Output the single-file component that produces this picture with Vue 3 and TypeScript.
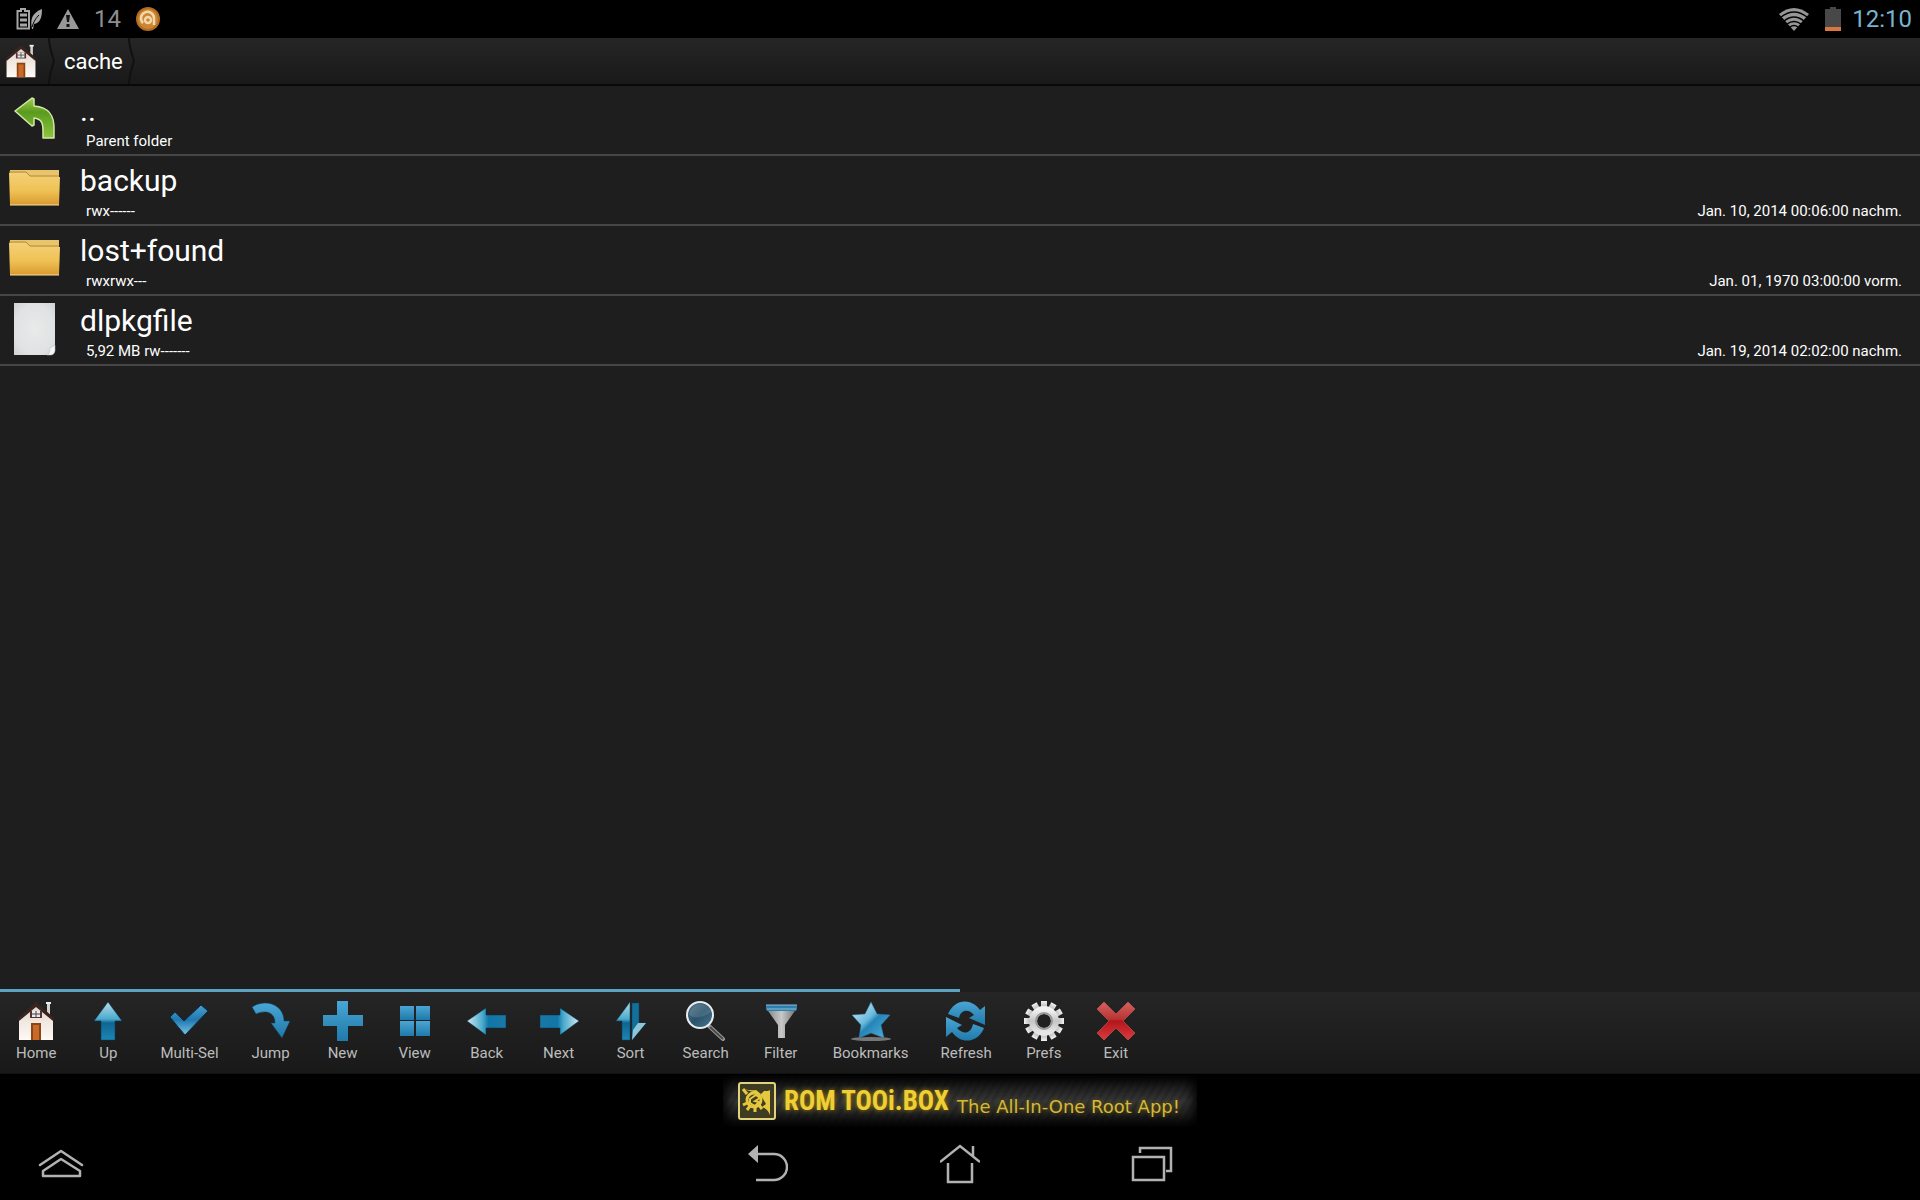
<script setup lang="ts">
interface Entry {
  name: string
  info: string
  date: string
  kind: 'parent' | 'folder' | 'file'
}

const entries: Entry[] = [
  { name: '..', info: 'Parent folder', date: '', kind: 'parent' },
  { name: 'backup', info: 'rwx------', date: 'Jan. 10, 2014 00:06:00 nachm.', kind: 'folder' },
  { name: 'lost+found', info: 'rwxrwx---', date: 'Jan. 01, 1970 03:00:00 vorm.', kind: 'folder' },
  { name: 'dlpkgfile', info: '5,92 MB rw-------', date: 'Jan. 19, 2014 02:02:00 nachm.', kind: 'file' },
]

const tools: string[] = [
  'Home', 'Up', 'Multi-Sel', 'Jump', 'New', 'View', 'Back', 'Next',
  'Sort', 'Search', 'Filter', 'Bookmarks', 'Refresh', 'Prefs', 'Exit',
]

const teeth: number[] = Array.from({ length: 12 }, (_, i) => i * 30)
</script>

<template>
  <div class="screen">
    <svg class="defs" width="0" height="0" aria-hidden="true">
      <defs>
        <linearGradient id="blue" x1="0" y1="0" x2="0" y2="1">
          <stop offset="0" stop-color="#4aa6d4" /><stop offset="1" stop-color="#1f79aa" />
        </linearGradient>
        <linearGradient id="blueUp" x1="0" y1="0" x2="0" y2="1">
          <stop offset="0" stop-color="#b9dce8" /><stop offset=".45" stop-color="#49a9cd" />
          <stop offset=".55" stop-color="#0f6591" /><stop offset="1" stop-color="#1b86b4" />
        </linearGradient>
        <linearGradient id="blueLeft">
          <stop offset="0" stop-color="#d3e9ef" /><stop offset=".4" stop-color="#49a9cd" />
          <stop offset=".55" stop-color="#1176a8" /><stop offset="1" stop-color="#1b78a6" />
        </linearGradient>
        <linearGradient id="blueRight" x1="1" x2="0">
          <stop offset="0" stop-color="#d3e9ef" /><stop offset=".4" stop-color="#49a9cd" />
          <stop offset=".55" stop-color="#1176a8" /><stop offset="1" stop-color="#1b78a6" />
        </linearGradient>
        <linearGradient id="check" x1="0" y1="0" x2="0" y2="1">
          <stop offset="0" stop-color="#4a9fce" /><stop offset=".5" stop-color="#2079b0" />
          <stop offset="1" stop-color="#7cc3e6" />
        </linearGradient>
        <linearGradient id="star" x1="0" y1="0" x2="1" y2="1">
          <stop offset="0" stop-color="#e0f2f8" /><stop offset=".45" stop-color="#68b8dc" />
          <stop offset=".55" stop-color="#2585b8" /><stop offset="1" stop-color="#57b5dc" />
        </linearGradient>
        <linearGradient id="metal">
          <stop offset="0" stop-color="#808080" /><stop offset=".5" stop-color="#c8c8c8" />
          <stop offset="1" stop-color="#6a6a6a" />
        </linearGradient>
        <linearGradient id="gear" x1="0" y1="0" x2="0" y2="1">
          <stop offset="0" stop-color="#f2f2f2" /><stop offset=".5" stop-color="#c4c4c4" />
          <stop offset="1" stop-color="#e6e6e6" />
        </linearGradient>
        <linearGradient id="red" x1="0" y1="0" x2="0" y2="1">
          <stop offset="0" stop-color="#d56260" /><stop offset=".45" stop-color="#b83434" />
          <stop offset=".5" stop-color="#b3161b" /><stop offset="1" stop-color="#dd3a3e" />
        </linearGradient>
        <linearGradient id="lens" x1="0" y1="0" x2="1" y2="1">
          <stop offset="0" stop-color="#58798c" /><stop offset=".5" stop-color="#2a536b" />
          <stop offset="1" stop-color="#4a7791" />
        </linearGradient>
        <linearGradient id="green" x1="0" y1="0" x2="0" y2="1">
          <stop offset="0" stop-color="#a5cf4f" /><stop offset=".35" stop-color="#5a9a1e" />
          <stop offset="1" stop-color="#8cc63c" />
        </linearGradient>
        <linearGradient id="gold" x1="0" y1="0" x2="0" y2="1">
          <stop offset="0" stop-color="#f3d078" /><stop offset=".55" stop-color="#efc255" />
          <stop offset="1" stop-color="#d99a30" />
        </linearGradient>
        <radialGradient id="paper" r=".8">
          <stop offset="0" stop-color="#e9eaea" /><stop offset=".6" stop-color="#e0e2e3" />
          <stop offset="1" stop-color="#c8cccd" />
        </radialGradient>
        <linearGradient id="wall" x1="0" y1="0" x2="0" y2="1">
          <stop offset="0" stop-color="#e2d6cf" /><stop offset="1" stop-color="#fffaf4" />
        </linearGradient>
        <symbol id="house" viewBox="0 0 40 40">
          <path d="M31 2h3v12l-3-3z" fill="#d8d2cc" />
          <path d="M30 1h5v2h-5z" fill="#eee" />
          <path d="M20 4 37 19v20H3V19z" fill="url(#wall)" />
          <path d="M20 1 2 17l1 3L20 6l17 14 1-3z" fill="#3a2420" />
          <path d="M14 10h12v7H14z" fill="#5d3030" />
          <path d="M16 10h8v6h-8z" fill="#e8ecec" />
          <path d="M20 10v6M16 13h8" stroke="#444" />
          <path d="M15 22h10v17H15z" fill="#8c4316" />
          <path d="M17 24h6v15h-6z" fill="#c96a29" />
        </symbol>
      </defs>
    </svg>

    <header class="status">
      <div class="status-left">
        <svg viewBox="0 0 26 24" width="26" height="24">
          <path d="M1.500 4H5V2h4v2h4v17.500H1.500z" fill="none" stroke="#a6a6a6" stroke-width="2" />
          <path d="M4 8h7M4 13h7M4 18h7" stroke="#a6a6a6" stroke-width="3" />
          <path d="M16 22c-2-10 0-16 10-20 0 9-2 14-8 15l-1 5z" fill="#a6a6a6" />
          <path d="M16 20c2-6 4-9 7-12" stroke="#000" fill="none" />
        </svg>
        <svg viewBox="0 0 22 20" width="22" height="20">
          <path d="M11 0 22 20H0z" fill="#989898" />
          <path d="M9 6h4l-1 7h-2zM9.500 15h3v3h-3z" fill="#111" />
        </svg>
        <span class="count">14</span>
        <svg viewBox="0 0 24 24" width="24" height="24">
          <circle cx="12" cy="12" r="12" fill="#b06c22" />
          <circle cx="12" cy="12" r="10" fill="#cc8632" />
          <path d="M7 16a6.500 6.500 0 1 1 11-4.500V18" fill="none" stroke="#f3d8ae" stroke-width="2.500" />
          <circle cx="12" cy="13" r="3" fill="none" stroke="#f3d8ae" stroke-width="2.500" />
        </svg>
      </div>
      <div class="status-right">
        <svg viewBox="0 0 32 24" width="32" height="24">
          <path d="M16 24 1 7Q16-5 31 7z" fill="#969696" />
          <path d="M3 10q13-10 26 0M6 14q10-8 20 0M9 17q7-5 14 0M12 20q4-3 8 0" fill="none" stroke="#000" stroke-width="1.500" />
        </svg>
        <svg viewBox="0 0 16 24" width="16" height="24">
          <path d="M0 2h5V0h6v2h5v18H0z" fill="#484848" />
          <path d="M0 20h16v4H0z" fill="#d9783c" />
        </svg>
        <time class="clock">12:10</time>
      </div>
    </header>

    <nav class="crumbs" aria-label="Path">
      <button class="crumb-home" aria-label="Root"><svg width="34" height="34"><use href="#house" /></svg></button>
      <svg viewBox="0 0 8 46" width="8" height="46"><path d="M1 0q0 8 5 23q-5 15-5 23" fill="none" stroke="#111" stroke-width="2" /></svg>
      <button class="crumb">cache</button>
      <svg viewBox="0 0 8 46" width="8" height="46"><path d="M1 0q0 8 5 23q-5 15-5 23" fill="none" stroke="#111" stroke-width="2" /></svg>
    </nav>

    <main class="files">
      <ul>
        <li v-for="e in entries" :key="e.name" class="row">
          <svg class="row-icon" viewBox="0 0 56 56" width="56" height="56">
            <template v-if="e.kind === 'parent'">
              <path d="M9 20 26 7l2 1v7c14 1 21 8 20 25v7H37v-7c0-9-2-12-9-13v7l-2 1z" fill="url(#green)" stroke="#d3e8ac" stroke-width="1.500" stroke-linejoin="round" />
            </template>
            <template v-else-if="e.kind === 'folder'">
              <path d="M4 9h49v35H4z" fill="#d79c34" />
              <path d="M4 9h49v8H4z" fill="#e8c46a" />
              <path d="M3 12h17l4 4h30l-1 28H4z" fill="url(#gold)" />
              <path d="M3 11h17l4 4h29" fill="none" stroke="#b98a36" />
              <path d="M4 44h49" stroke="#ffdf98" />
            </template>
            <template v-else>
              <path d="M8 2h41v46l-7 6H8z" fill="url(#paper)" />
              <path d="M41 54q3-1 3-7l5-3v6q-1 4-4 4z" fill="#f6f6f6" stroke="#b8bcbd" stroke-width=".5" />
            </template>
          </svg>
          <div class="row-text">
            <div class="name">{{ e.name }}</div>
            <div class="meta"><span>{{ e.info }}</span><time>{{ e.date }}</time></div>
          </div>
        </li>
      </ul>
    </main>

    <div class="progress"><div class="progress-fill"></div></div>

    <div class="toolbar" role="toolbar">
      <button v-for="t in tools" :key="t" class="tool">
        <svg viewBox="0 0 40 40" width="40" height="40">
          <use v-if="t === 'Home'" href="#house" />
          <path v-else-if="t === 'Up'" d="M20 1 34 20h-7v19H13V20H6z" fill="url(#blueUp)" stroke="#073e5a" stroke-width=".5" />
          <path v-else-if="t === 'Multi-Sel'" d="m1 16 5-5 9 9L32 4l7 6-23 24Q9 26 1 16z" fill="url(#check)" stroke="#06304a" />
          <path v-else-if="t === 'Jump'" d="M1 6C15-3 33 4 33 20h6l-8 17-11-15h4C24 10 13 9 5 13z" fill="url(#blue)" stroke="#0a4262" stroke-width=".5" />
          <path v-else-if="t === 'New'" d="M14 0h11v14h15v11H25v15H14V25H0V14h14z" fill="url(#blue)" />
          <g v-else-if="t === 'View'" fill="url(#blue)">
            <path d="M5 5h14v14H5z" /><path d="M21 5h14v14H21z" /><path d="M5 20h14v15H5z" /><path d="M21 20h14v15H21z" />
          </g>
          <path v-else-if="t === 'Back'" d="M0 20 19 7v7h20v13H19v7z" fill="url(#blueLeft)" stroke="#07364d" stroke-width=".5" />
          <path v-else-if="t === 'Next'" d="M40 20 21 7v7H1v13h20v7z" fill="url(#blueRight)" stroke="#07364d" stroke-width=".5" />
          <g v-else-if="t === 'Sort'">
            <path d="M19 1v38h-8V20H5z" fill="url(#blueUp)" stroke="#08445f" stroke-width=".5" />
            <path d="M21 2h7v20h7L21 39z" fill="#14709b" stroke="#08445f" stroke-width=".5" />
            <path d="M27 22h8L21 39l1-10z" fill="#8fc5d8" />
          </g>
          <g v-else-if="t === 'Search'">
            <path d="m23 25 14 13" stroke="#999" stroke-width="4" stroke-linecap="round" />
            <path d="m24 26 13 12" stroke="#4a4a4a" stroke-width="2" />
            <circle cx="14" cy="14" r="13" fill="url(#lens)" stroke="#e9edee" stroke-width="2" />
            <path d="M3 14q9 6 22-3Q23 3 14 3 5 4 3 14z" fill="#fff" opacity=".12" />
          </g>
          <g v-else-if="t === 'Filter'">
            <path d="M5 7h31L24 24v13h-7V24z" fill="url(#metal)" />
            <path d="M5 4h31v4l-1 2H6L5 8z" fill="#2c7fae" />
            <path d="M5 4h31M6 8h29" stroke="#8ebdd4" />
          </g>
          <g v-else-if="t === 'Bookmarks'">
            <ellipse cx="20" cy="38" rx="20" ry="2" fill="#777" />
            <path d="m20 1 6 12 13 1-9 10 3 13-13-5-12 5 2-13L1 14l13-1z" fill="url(#star)" stroke="#2a7ba5" stroke-width=".5" />
          </g>
          <g v-else-if="t === 'Refresh'" fill="url(#blue)">
            <path d="M2 13C8-2 25-4 34 9l5-4v19L23 17l5-3C23 8 15 8 13 17z" />
            <path d="M38 27C32 42 15 44 6 31l-6 5V16l16 8-5 3c6 7 14 6 16-4z" />
          </g>
          <g v-else-if="t === 'Prefs'">
            <rect v-for="a in teeth" :key="a" x="17" y="0" width="6" height="10" fill="url(#gear)" :transform="`rotate(${a} 20 20)`" />
            <circle cx="20" cy="20" r="11" fill="none" stroke="url(#gear)" stroke-width="8" />
            <circle cx="20" cy="20" r="8" fill="none" stroke="#9a9a9a" stroke-width="2" />
          </g>
          <path v-else d="m8 1 12 12L32 1l7 7-12 12 12 12-7 7-12-12L8 39l-7-7 12-12L1 8z" fill="url(#red)" stroke="#e06464" stroke-width=".5" />
        </svg>
        <span>{{ t }}</span>
      </button>
    </div>

    <div class="ad">
      <a href="#" class="banner">
        <svg viewBox="0 0 38 38" width="38" height="38">
          <rect x="1" y="1" width="36" height="36" rx="2" fill="#3d3b22" stroke="#e3d27c" stroke-width="2" />
          <path d="M5 7q9 2 13 1l5 4 3-3h4l2-1v25q-2-6-8-8l4-3-6-10z" fill="#e6c83f" />
          <circle cx="16" cy="18" r="7" fill="none" stroke="#e6c83f" stroke-width="3" />
          <path d="m9 12-4-5M9 21l-4 2M12 24l-3 4M17 25v5M21 23l3 4" stroke="#e6c83f" stroke-width="3" />
          <path d="m12 17 6-4 4 3-5 3 4 1-4 4-5-3z" fill="none" stroke="#e6c83f" stroke-width="2" />
        </svg>
        <strong>ROM TOOi.BOX</strong>
        <span class="tagline">The All-In-One Root App!</span>
      </a>
    </div>

    <footer class="navbar">
      <button class="nav-up" aria-label="Show launcher">
        <svg viewBox="0 0 46 30" width="46" height="30">
          <path d="M2 16 23 2l21 14M5 22v5h37v-5L23 10z" fill="none" stroke="#b2b2b2" stroke-width="2.500" stroke-linejoin="round" stroke-linecap="round" />
        </svg>
      </button>
      <div class="nav-main">
        <button aria-label="Go back">
          <svg viewBox="0 0 40 40" width="40" height="40">
            <path d="M8 10h18a13 13 0 0 1 0 26H8" fill="none" stroke="#b2b2b2" stroke-width="2.500" />
            <path d="M0 10 10 1v18z" fill="#b2b2b2" />
          </svg>
        </button>
        <button aria-label="Home screen">
          <svg viewBox="0 0 40 40" width="40" height="40">
            <path d="M0 18 20 2l20 16M33 2v10M8 19v19h24V19" fill="none" stroke="#b2b2b2" stroke-width="2.500" />
          </svg>
        </button>
        <button aria-label="Recent apps">
          <svg viewBox="0 0 42 40" width="42" height="40">
            <path d="M2 13h31v23H2zM9 9V4h31v23h-5" fill="none" stroke="#b2b2b2" stroke-width="2.500" />
          </svg>
        </button>
      </div>
    </footer>
  </div>
</template>

<style>
body {
  margin: 0;
  background: #000;
}
</style>

<style scoped>
.screen {
  min-height: 100vh;
  display: flex;
  flex-direction: column;
  background: #1e1e1e;
  color: #fff;
  font-family: Roboto, "Noto Sans", sans-serif;
}
.defs {
  position: absolute;
}
svg {
  display: block;
  flex: none;
}
button {
  border: 0;
  padding: 0;
  background: none;
  color: inherit;
  font: inherit;
}
.status {
  height: 38px;
  display: flex;
  justify-content: space-between;
  align-items: center;
  padding: 0 8px 0 16px;
  background: #000;
  font-size: 24px;
  line-height: 40px;
}
.status-left,
.status-right {
  display: flex;
  align-items: center;
  gap: 15px;
}
.count {
  color: #8e8e8e;
}
.clock {
  color: #78b4cf;
  margin-left: -4px;
}
.crumbs {
  height: 46px;
  display: flex;
  align-items: center;
  background: linear-gradient(#262626, #191919);
  border-bottom: 2px solid #080808;
  font-size: 22px;
}
.crumb-home {
  width: 48px;
  padding-left: 4px;
}
.crumb {
  padding: 0 5px 0 8px;
}
.files {
  flex: 1;
}
ul {
  list-style: none;
  margin: 0;
  padding: 0;
}
.row {
  display: flex;
  height: 68px;
  border-bottom: 2px solid #464646;
}
.row-icon {
  margin: 5px 18px 0 6px;
}
.row-text {
  flex: 1;
  padding-right: 18px;
}
.name {
  padding-top: 6px;
  font-size: 30px;
  line-height: 38px;
}
.meta {
  display: flex;
  justify-content: space-between;
  padding: 1px 0 0 6px;
  font-size: 15px;
  line-height: 20px;
}
.progress {
  height: 3px;
  background: #1e1e1e;
}
.progress-fill {
  width: 50%;
  height: 3px;
  background: #5ba3c0;
}
.toolbar {
  height: 81px;
  display: flex;
  background: linear-gradient(#252525, #191919);
  border-bottom: 1px solid #111;
  color: #bcbcbc;
  font-size: 15px;
  line-height: 20px;
}
.tool {
  min-width: 72px;
  padding: 9px 16px 0;
  display: flex;
  flex-direction: column;
  align-items: center;
  gap: 2px;
}
.ad {
  height: 54px;
  display: flex;
  justify-content: center;
  align-items: center;
  background: #000;
}
.banner {
  width: 444px;
  height: 52px;
  padding: 0 15px;
  display: flex;
  align-items: center;
  gap: 8px;
  background: repeating-linear-gradient(120deg, #0002 0 2px, #fff0 4px 7px), linear-gradient(#0b0b0b, #363636 50%, #0b0b0b);
  box-shadow: inset 0 0 12px 4px #000;
  color: #efcf35;
  text-decoration: none;
  white-space: nowrap;
}
.banner strong {
  width: 165px;
  font: bold 27px/38px "Liberation Sans Narrow", "Roboto Condensed", Roboto, sans-serif;
  text-shadow: 0 0 5px #a48600;
}
.tagline {
  padding-top: 12px;
  font: 18px/24px "DejaVu Sans", sans-serif;
  color: #d3b83d;
  text-shadow: 0 0 4px #6b5a00;
}
.navbar {
  height: 72px;
  display: grid;
  grid-template-columns: 1fr auto 1fr;
  align-items: center;
  background: #000;
}
.nav-up {
  justify-self: start;
  padding-left: 38px;
}
.nav-main {
  display: flex;
}
.nav-main button {
  width: 192px;
  display: flex;
  justify-content: center;
}
</style>
